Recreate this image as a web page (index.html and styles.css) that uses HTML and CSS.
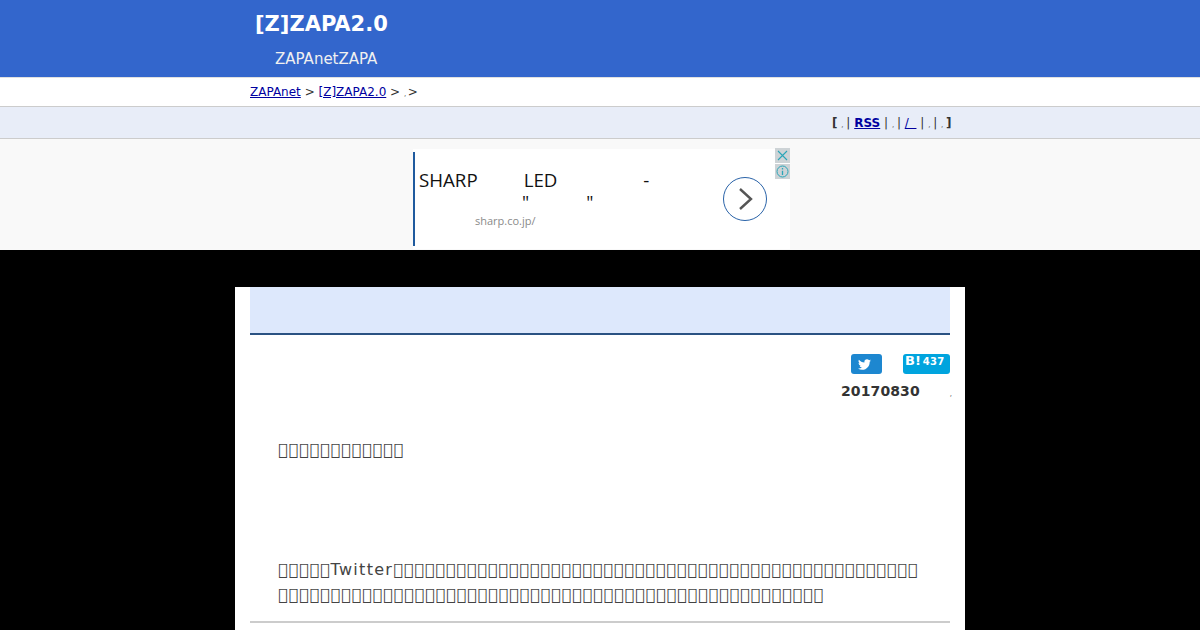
FILE: index.html
```html
<!DOCTYPE html>
<html lang="ja">
<head>
    <meta charset="UTF-8">
    <title>[Z]ZAPA2.0</title>
    <link rel="stylesheet" href="styles.css">
</head>
<body>

    <!-- header -->
    <div class="site-head">
        <div class="site-title">[Z]ZAPA2.0</div>
        <div class="site-sub">ZAPAnetZAPA</div>
    </div>

    <div class="crumbs">
        <a href="#">ZAPAnet</a> &gt; <a href="#">[Z]ZAPA2.0</a> &gt; <span class="tiny crumb-comma">,</span>&gt;
    </div>

    <div class="nav-bar">
        <div class="nav-links">
            <b>[</b> <span class="tiny">,</span> | <a class="rss" href="#">RSS</a> | <span class="tiny">,</span> | <a href="#">/ &nbsp;</a> | <span class="tiny">,</span> | <span class="tiny">,</span> <b>]</b>
        </div>
    </div>

    <!-- ad -->
    <div class="ad-zone">
        <div class="ad">
            <div class="ad-body">
                <div class="ad-line1"><span>SHARP</span><span class="led">LED</span><span class="dash">-</span></div>
                <div class="ad-line2"><span>"</span><span class="quote2">"</span></div>
                <div class="ad-url">sharp.co.jp/</div>
            </div>
            <div class="ad-go">
                <svg width="44" height="44" viewBox="0 0 44 44">
                    <circle cx="22" cy="22" r="21.5" fill="#fff" stroke="#2a63a8"/>
                    <path d="M17 12l11 10-11 10" fill="none" stroke="#555" stroke-width="2.4"/>
                </svg>
            </div>
            <div class="ad-btns">
                <div class="ad-btn">
                    <svg width="11" height="11" viewBox="0 0 11 11"><path d="M1 1l9 9M10 1l-9 9" stroke="#2aa5b8" stroke-width="1.1"/></svg>
                </div>
                <div class="ad-btn">
                    <svg width="13" height="13" viewBox="0 0 13 13"><circle cx="6.5" cy="6.5" r="5.5" fill="none" stroke="#2aa5b8"/><path d="M6.5 3v1.5M6.5 5.7V10" stroke="#2aa5b8" stroke-width="1.3"/></svg>
                </div>
            </div>
        </div>
    </div>

    <!-- main -->
    <div class="page">
        <div class="main">
            <div class="title-band"></div>

            <div class="share">
                <a class="btn-tw" href="#">
                    <svg width="13" height="13" viewBox="0 0 24 24"><path fill="#fff" d="M23.953 4.57a10 10 0 01-2.825.775 4.958 4.958 0 002.163-2.723c-.951.555-2.005.959-3.127 1.184a4.92 4.92 0 00-8.384 4.482C7.69 8.095 4.067 6.13 1.64 3.162a4.822 4.822 0 00-.666 2.475c0 1.71.87 3.213 2.188 4.096a4.904 4.904 0 01-2.228-.616v.06a4.923 4.923 0 003.946 4.827 4.996 4.996 0 01-2.212.085 4.936 4.936 0 004.604 3.417 9.867 9.867 0 01-6.102 2.105c-.39 0-.779-.023-1.17-.067a13.995 13.995 0 007.557 2.209c9.053 0 13.998-7.496 13.998-13.985 0-.21 0-.42-.015-.63A9.935 9.935 0 0024 4.59z"/></svg>
                </a>
                <a class="btn-hb" href="#"><span class="hb-b">B!</span><span class="hb-n">437</span></a>
            </div>

            <div class="date-row"><span class="date">20170830</span><span class="tiny comma">,</span></div>

            <div class="entry">
                <p class="lead">&#xE000;&#xE000;&#xE000;&#xE000;&#xE000;&#xE000;&#xE000;&#xE000;&#xE000;&#xE000;&#xE000;&#xE000;</p>
                <p class="para">&#xE000;&#xE000;&#xE000;&#xE000;&#xE000;<span class="latin">Twitter</span>&#xE000;&#xE000;&#xE000;&#xE000;&#xE000;&#xE000;&#xE000;&#xE000;&#xE000;&#xE000;&#xE000;&#xE000;&#xE000;&#xE000;&#xE000;&#xE000;&#xE000;&#xE000;&#xE000;&#xE000;&#xE000;&#xE000;&#xE000;&#xE000;&#xE000;&#xE000;&#xE000;&#xE000;&#xE000;&#xE000;&#xE000;&#xE000;&#xE000;&#xE000;&#xE000;&#xE000;&#xE000;&#xE000;&#xE000;&#xE000;&#xE000;&#xE000;&#xE000;&#xE000;&#xE000;&#xE000;&#xE000;&#xE000;&#xE000;&#xE000;<br>&#xE000;&#xE000;&#xE000;&#xE000;&#xE000;&#xE000;&#xE000;&#xE000;&#xE000;&#xE000;&#xE000;&#xE000;&#xE000;&#xE000;&#xE000;&#xE000;&#xE000;&#xE000;&#xE000;&#xE000;&#xE000;&#xE000;&#xE000;&#xE000;&#xE000;&#xE000;&#xE000;&#xE000;&#xE000;&#xE000;&#xE000;&#xE000;&#xE000;&#xE000;&#xE000;&#xE000;&#xE000;&#xE000;&#xE000;&#xE000;&#xE000;&#xE000;&#xE000;&#xE000;&#xE000;&#xE000;&#xE000;&#xE000;&#xE000;&#xE000;&#xE000;&#xE000;</p>
            </div>
            <div class="rule"></div>
        </div>
    </div>

</body>
</html>
```

FILE: styles.css
```css
body {
    margin: 0;
    height: 630px;
    overflow: hidden;
    background: #000;
    font-family: "DejaVu Sans", sans-serif;
    color: #333;
}

a {
    color: #0000a0;
}

.tiny {
    font-size: 7px;
    letter-spacing: -1px;
}

.crumb-comma {
    letter-spacing: 1.5px;
}

.site-head {
    height: 77px;
    box-sizing: border-box;
    padding: 10px 0 0 255px;
    background: #3366cc;
    color: #fff;
}

.site-title {
    font-size: 21px;
    font-weight: bold;
    line-height: 28px;
}

.site-sub {
    font-size: 15px;
    line-height: 20px;
    margin: 11px 0 0 20px;
    color: #f0f0f0;
}

.crumbs {
    height: 29px;
    box-sizing: border-box;
    padding-left: 250px;
    border-top: 1px solid #e0e0e0;
    font-size: 12px;
    line-height: 29px;
    background: #fff;
}

.nav-bar {
    height: 33px;
    box-sizing: border-box;
    background: #e8edf8;
    border-top: 1px solid #ccc;
    border-bottom: 1px solid #ccc;
    font-size: 12px;
    line-height: 32px;
}

.nav-links {
    margin-left: 832px;
}

.rss {
    font-weight: bold;
}

.ad-zone {
    height: 111px;
    box-sizing: border-box;
    padding: 10px 0 0 413px;
    background: #f9f9f9;
}

.ad {
    width: 377px;
    height: 100px;
    display: flex;
    background: #fff;
    position: relative;
    font-family: "Open Sans", sans-serif;
    color: #111;
}

.ad-body {
    width: 306px;
    height: 94px;
    margin-top: 3px;
    box-sizing: border-box;
    padding-left: 4px;
    border-left: 2px solid #1f5a9e;
}

.ad-line1 {
    font-size: 18.7px;
    line-height: 24px;
    margin-top: 16px;
    display: flex;
}

.led {
    margin-left: 46px;
}

.dash {
    margin-left: 86px;
}

.ad-line2 {
    font-size: 18px;
    line-height: 20px;
    margin-left: 103px;
    display: flex;
}

.quote2 {
    margin-left: 57px;
}

.ad-url {
    font-size: 11px;
    line-height: 18px;
    margin-left: 56px;
    color: #8a8a8a;
}

.ad-go {
    margin: 28px 0 0 4px;
}

.ad-btns {
    position: absolute;
    top: -1px;
    right: 0;
}

.ad-btn {
    width: 15px;
    height: 15px;
    margin-bottom: 1px;
    display: flex;
    align-items: center;
    justify-content: center;
    background: #cdd3d6;
}

.page {
    width: 730px;
    height: 343px;
    margin: 37px auto 0;
    box-sizing: border-box;
    padding: 0 15px;
    background: #fff;
}

.title-band {
    height: 46px;
    background: #dde8fc;
    border-bottom: 2px solid #2a5282;
}

.share {
    display: flex;
    justify-content: flex-end;
    align-items: flex-start;
    gap: 21px;
    margin-top: 19px;
}

.btn-tw {
    width: 31px;
    height: 20px;
    box-sizing: border-box;
    padding-right: 4px;
    display: flex;
    align-items: center;
    justify-content: center;
    background: #1d87d0;
    border-radius: 3px;
}

.btn-hb {
    width: 47px;
    height: 20px;
    box-sizing: border-box;
    padding-left: 2px;
    display: flex;
    background: #00a4de;
    border-radius: 3px;
    color: #fff;
    font-weight: bold;
    text-decoration: none;
}

.hb-b {
    font-size: 13px;
    line-height: 13px;
}

.hb-n {
    font-size: 10px;
    line-height: 15px;
    margin-left: 2px;
    letter-spacing: .3px;
}

.date-row {
    display: flex;
    justify-content: flex-end;
    margin-top: 8px;
    line-height: 18px;
}

.date {
    font-size: 14px;
    font-weight: bold;
    letter-spacing: .1px;
}

.comma {
    margin: 3px -1px 0 30px;
}

.entry {
    padding-left: 28px;
    font-size: 16px;
    color: #444;
    letter-spacing: .9px;
    white-space: nowrap;
}

.latin {
    letter-spacing: 1.3px;
}

.lead {
    margin: 34px 0 0;
    line-height: 25px;
}

.para {
    margin: 95px 0 0;
    line-height: 25px;
}

.rule {
    margin-top: 14px;
    border-top: 2px solid #ccc;
}
```
